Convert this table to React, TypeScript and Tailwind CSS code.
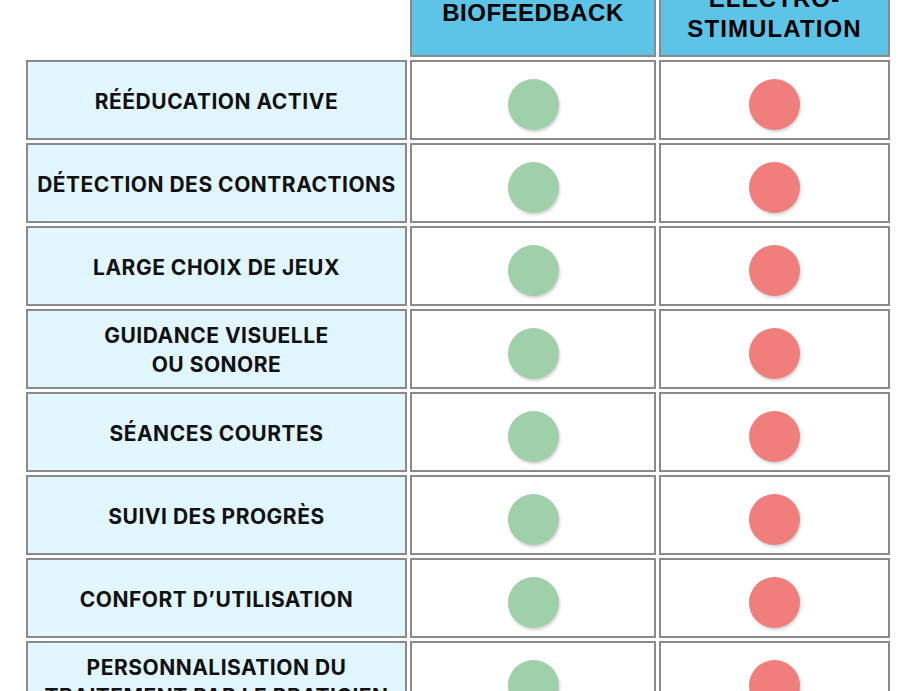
import React from "react";

const rows: string[][] = [
  ["RÉÉDUCATION ACTIVE"],
  ["DÉTECTION DES CONTRACTIONS"],
  ["LARGE CHOIX DE JEUX"],
  ["GUIDANCE VISUELLE", "OU SONORE"],
  ["SÉANCES COURTES"],
  ["SUIVI DES PROGRÈS"],
  ["CONFORT D’UTILISATION"],
  ["PERSONNALISATION DU", "TRAITEMENT PAR LE PRATICIEN"],
];

function Dot({ color }: { color: "green" | "red" }) {
  return (
    <div
      className={
        "mt-2 h-[51px] w-[51px] rounded-full shadow-[1px_2px_3px_rgba(0,0,0,0.18)] " +
        (color === "green" ? "bg-[#9fd0aa]" : "bg-[#ef7e7d]")
      }
    />
  );
}

export default function App() {
  return (
    <div className="h-[691px] w-[921px] overflow-hidden bg-white">
      <div className="-mt-[28px] ml-[26px] grid grid-cols-[381px_246px_231px] gap-[3px] text-black">
        <div />
        <div className="flex items-center justify-center border-2 border-[#8a8a8a] bg-[#5dc3e7] pb-1 font-['Liberation_Sans',Arial,sans-serif] text-[24px] font-bold leading-[30px] tracking-[0.5px]">
          BIOFEEDBACK
        </div>
        <div className="flex flex-col items-center justify-center border-2 border-[#8a8a8a] bg-[#5dc3e7] pt-[10px] pb-[11px] text-center font-['Liberation_Sans',Arial,sans-serif] text-[24px] font-bold leading-[30px] tracking-[1.1px]">
          <span>ELECTRO-</span>
          <span>STIMULATION</span>
        </div>
        {rows.map((lines, i) => (
          <React.Fragment key={i}>
            <div className="flex h-[80px] flex-col items-center justify-center border-2 border-[#8a8a8a] bg-[#e1f6fe] pt-[2px] text-center font-['Inter',sans-serif] text-[21px] font-bold leading-[29px] tracking-[0.5px] text-[#111]">
              {lines.map((l, j) => (
                <span key={j} className="whitespace-nowrap">
                  {l}
                </span>
              ))}
            </div>
            <div className="flex h-[80px] items-center justify-center border-2 border-[#8a8a8a] bg-white">
              <Dot color="green" />
            </div>
            <div className="flex h-[80px] items-center justify-center border-2 border-[#8a8a8a] bg-white">
              <Dot color="red" />
            </div>
          </React.Fragment>
        ))}
      </div>
    </div>
  );
}
